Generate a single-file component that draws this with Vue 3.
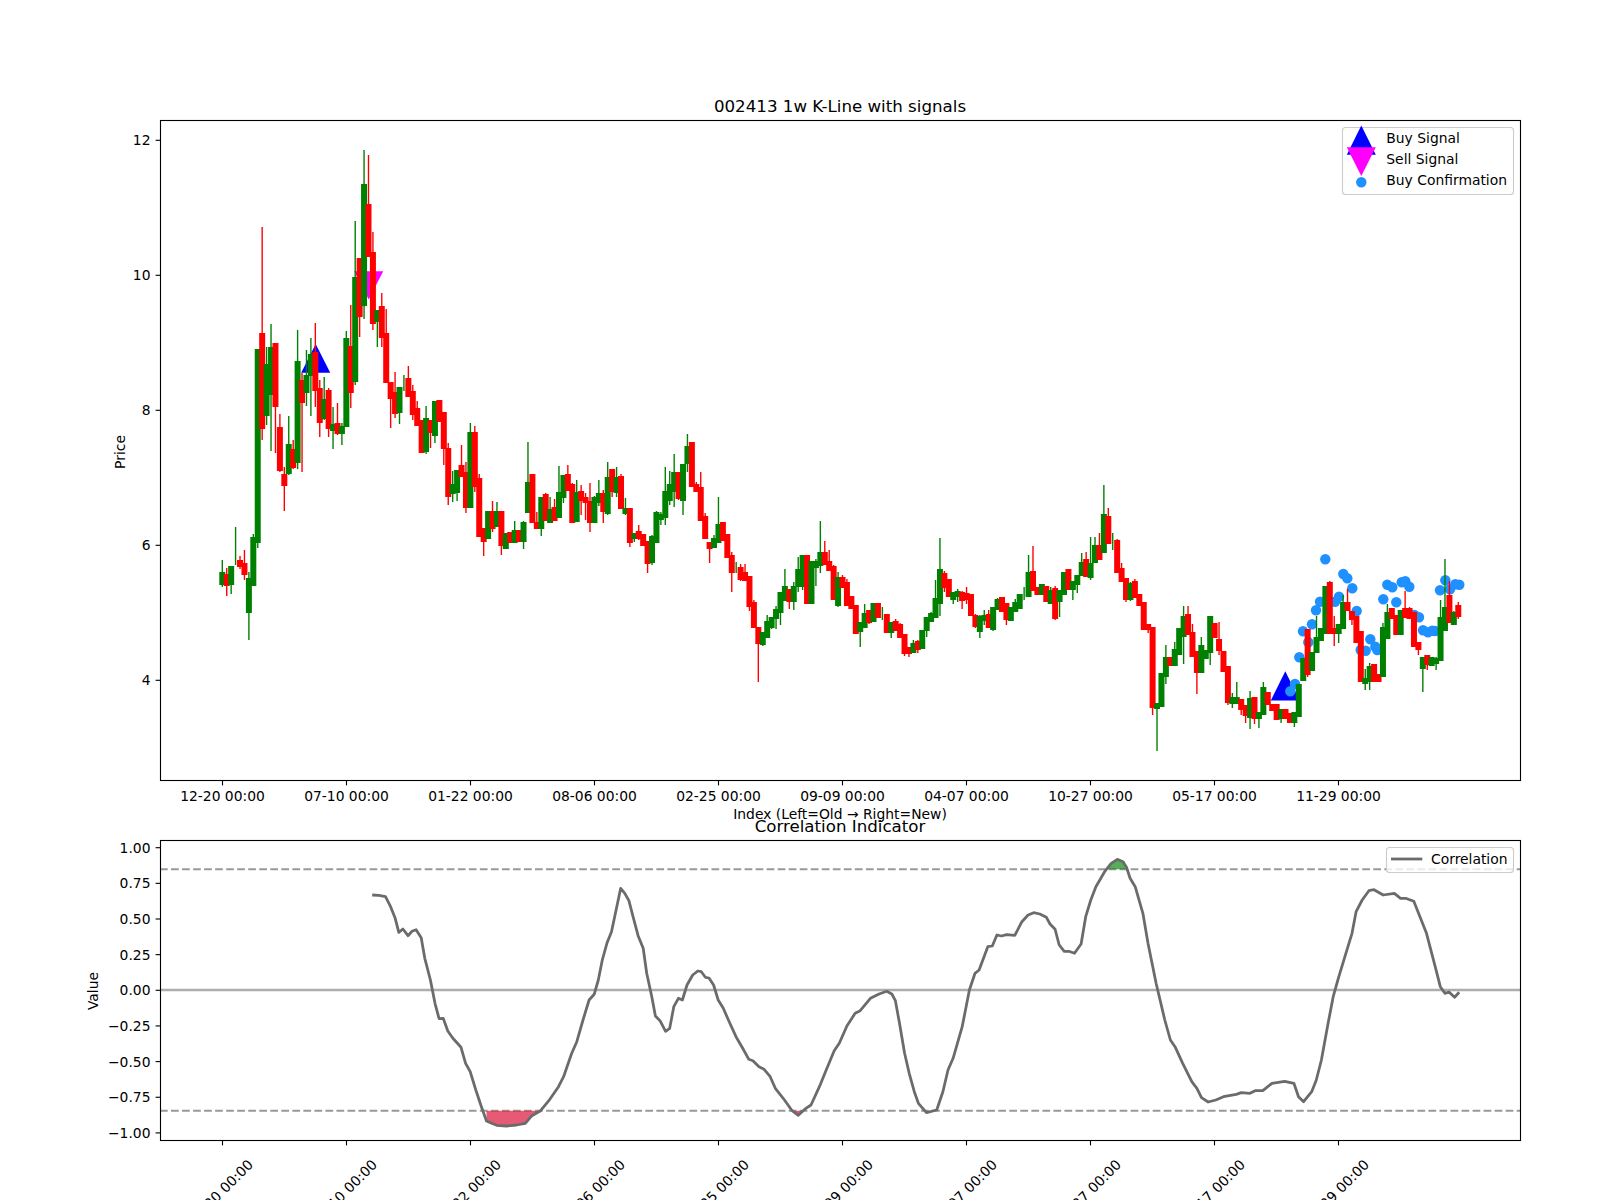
<script setup>
import { computed } from 'vue'

// color high bodyTop bodyBottom low, all in chart pixels
const rawBars = `
G 560 572 585 587
R 568 574 586 596
G 566 566 585 594
G 527 565 565 565
R 556 560 567 569
R 550 563 575 580
G 572 578 613 640
G 534 537 586 586
G 350 349 543 548
R 227 333 429 440
G 347 364 416 425
G 324 347 395 451
R 343 343 407 453
R 414 427 471 472
R 467 474 486 511
G 416 444 474 475
R 440 449 468 469
G 330 361 463 469
R 373 380 403 472
G 350 375 393 406
G 338 354 376 416
R 323 352 391 407
R 380 388 423 437
G 377 399 419 420
R 388 390 429 437
G 407 424 431 449
R 403 423 434 435
G 423 426 434 445
G 331 338 427 427
R 305 346 393 408
G 221 277 382 385
R 258 258 317 337
G 150 184 306 319
R 155 204 257 257
R 232 252 324 330
G 310 310 322 347
R 293 306 338 347
R 309 333 383 383
R 382 382 399 428
R 372 392 414 418
G 387 387 413 424
G 375 390 390 391
R 366 378 397 397
R 385 391 415 420
R 401 408 426 426
R 420 420 453 453
G 406 418 452 454
R 420 420 433 448
G 401 401 436 443
R 400 400 422 422
R 412 412 449 465
R 443 448 497 505
G 471 484 494 502
G 470 470 493 501
R 445 465 477 477
R 462 472 508 513
G 423 432 508 508
R 426 432 487 492
R 474 478 537 537
R 528 528 542 556
G 511 511 539 539
R 501 511 529 532
G 502 511 527 527
R 511 511 546 555
G 533 533 549 549
R 532 532 543 543
G 521 530 543 543
R 530 530 542 542
G 521 522 542 549
G 442 482 513 513
R 474 474 523 523
R 512 522 529 529
G 497 497 529 536
R 493 494 521 521
G 497 509 523 523
R 499 507 521 521
G 466 492 518 518
G 475 475 498 503
R 465 474 491 491
R 483 484 523 523
G 480 492 522 522
R 485 491 501 515
R 493 497 503 520
R 483 501 523 532
G 496 497 523 523
G 480 493 503 506
R 490 493 512 523
G 462 477 514 515
R 469 469 492 497
G 467 477 493 497
R 474 476 509 509
G 498 508 514 515
R 508 508 543 547
G 533 533 539 542
R 525 531 539 540
R 534 534 546 546
R 541 541 564 573
G 535 536 563 565
G 511 512 543 543
G 512 514 520 525
G 467 491 518 525
G 471 484 501 505
G 454 472 492 507
R 472 472 499 500
G 464 464 501 515
G 434 446 464 472
R 442 442 487 487
R 482 484 492 492
R 472 487 521 521
R 513 516 539 539
R 542 542 549 563
G 535 538 548 548
G 497 524 543 543
R 522 522 541 541
R 534 534 558 558
R 552 555 573 592
G 562 570 570 573
R 564 567 580 581
R 564 572 581 581
R 576 576 607 611
R 600 602 628 628
R 627 627 644 682
G 632 632 645 646
G 615 621 638 638
G 617 617 628 629
G 606 609 619 629
G 592 592 613 625
G 569 586 601 601
R 589 589 602 609
G 582 586 602 610
G 557 569 587 592
G 555 555 587 590
R 555 555 604 604
G 561 561 604 604
G 559 561 568 586
G 521 552 566 573
R 541 552 565 565
R 550 561 571 571
R 565 566 600 600
G 572 577 606 607
R 575 577 588 588
R 579 582 606 606
R 596 596 609 609
R 605 605 634 634
G 622 622 632 647
G 604 613 628 628
R 610 610 623 624
G 603 603 622 622
R 603 603 618 618
G 607 620 620 620
R 614 614 633 633
G 622 622 633 638
R 619 621 631 631
R 623 624 638 638
R 634 634 654 656
R 647 647 654 657
G 640 643 653 653
R 640 641 650 653
G 630 630 649 649
G 617 617 631 637
G 612 613 622 622
G 580 598 618 618
G 538 569 604 616
R 571 573 588 592
R 579 579 597 597
G 592 592 600 604
G 589 591 597 602
R 591 592 601 609
R 587 593 600 604
R 594 594 616 616
R 614 615 627 628
G 615 616 632 638
G 610 615 621 625
R 610 614 628 628
G 607 607 630 631
G 598 599 610 610
R 597 597 612 612
R 603 603 620 625
G 607 607 621 621
G 599 602 612 612
G 594 594 609 609
G 587 591 591 600
G 555 572 597 597
R 546 571 591 591
R 587 587 595 595
G 584 584 595 595
R 586 586 602 602
G 587 590 604 604
R 586 588 619 620
G 590 590 602 617
G 572 572 595 595
R 569 569 590 590
G 581 581 590 600
G 575 575 585 593
G 553 562 576 576
R 552 559 577 577
G 537 563 578 580
G 537 545 563 563
R 533 545 560 560
G 485 514 553 553
R 508 516 544 544
G 533 541 541 550
R 539 540 573 573
R 563 568 582 582
R 578 578 600 602
G 582 583 600 601
R 579 581 598 598
R 594 594 606 606
R 602 602 630 630
R 624 624 630 633
R 627 627 708 715
G 703 703 709 751
G 673 673 707 707
G 645 657 677 684
R 657 657 666 666
G 642 649 666 666
G 628 628 655 655
G 606 616 637 664
R 606 614 635 635
R 624 632 657 657
R 651 651 673 694
G 637 645 673 673
G 650 650 659 659
G 616 616 653 665
R 623 623 638 638
R 622 639 651 655
R 651 651 672 672
R 666 666 703 705
G 693 697 704 708
G 682 697 704 704
R 699 699 710 715
R 705 705 716 723
G 691 698 718 729
R 697 697 719 724
G 712 712 719 728
G 682 687 715 715
R 692 692 705 705
R 704 704 711 711
R 704 704 720 720
G 709 709 719 723
R 709 709 719 719
R 713 713 723 723
G 712 712 723 727
G 684 684 717 717
G 658 658 681 681
R 629 629 675 677
G 652 652 671 671
G 616 637 653 653
G 628 628 641 641
G 586 586 634 634
R 581 582 634 634
R 616 628 634 646
G 624 624 634 643
G 595 602 629 629
R 589 602 611 611
R 611 611 620 625
R 616 616 643 643
R 631 631 682 682
G 669 678 684 690
G 663 666 682 690
R 664 664 682 682
R 674 674 682 682
G 623 627 677 677
G 604 612 639 639
R 608 608 619 619
R 615 615 635 635
G 610 610 635 635
R 591 608 618 618
R 607 608 619 619
R 612 612 647 647
R 642 642 650 655
G 657 657 669 692
R 655 655 665 670
G 657 657 666 666
G 657 658 664 670
G 600 617 661 661
G 559 607 631 631
R 581 595 623 623
G 611 612 625 625
R 602 605 617 619
`

const candles = computed(() =>
  rawBars.trim().split('\n').map((line, i) => {
    const [c, high, top, bottom, low] = line.split(' ')
    return {
      x: 222.3 + i * 4.43,
      color: c === 'R' ? '#ff0000' : '#008000',
      high: +high, top: +top, bottom: +bottom, low: +low,
    }
  })
)

const confirmDots = [
  [1325.3, 559.3], [1343.3, 574], [1347.3, 578.3], [1352.3, 588.3], [1339, 596.7], [1335, 601.7],
  [1320, 601.7], [1316, 610.3], [1312, 624.3], [1303, 631.3], [1308.3, 642.3], [1356.7, 611],
  [1299.3, 657.3], [1295, 684], [1290.3, 691.3], [1383.3, 599.3], [1387.3, 584.7], [1392.3, 587.3],
  [1396.3, 602.3], [1401.7, 582.3], [1405.3, 581.3], [1409.3, 586.7], [1414.3, 615], [1419, 617.3],
  [1423, 630.3], [1428, 632.3], [1432.3, 630.7], [1435, 631], [1370.3, 639.3], [1375.3, 646.7],
  [1377.3, 650], [1360.7, 650], [1365.7, 650.7], [1445.3, 580.3], [1440, 590.3], [1450, 589.3],
  [1455.3, 584.3], [1459.3, 584.7],
]

const corr = [
  [372.2, 895], [378.9, 895.3], [385.5, 896.7], [390.6, 906.7], [395.2, 918.3], [398.8, 932.3],
  [402.9, 929], [408, 935.7], [412, 931.3], [416.1, 929.7], [421.2, 937.7], [424.8, 958.3],
  [430.4, 980], [435, 1003.3], [439.1, 1018.7], [443.2, 1018.3], [447.8, 1031], [452.9, 1038.3],
  [461, 1047.3], [465.6, 1063.3], [470.2, 1071.7], [475.8, 1090], [481.4, 1106.7], [486.5, 1121],
  [491.6, 1123.3], [496.7, 1125.3], [506.4, 1126], [516.6, 1125], [525.3, 1123.3], [531.9, 1115.7],
  [540.6, 1110.7], [548.8, 1100.7], [558.5, 1086.7], [563.6, 1076.7], [571.7, 1053.3], [576.8, 1041.7],
  [583, 1020], [589.1, 1000], [594.2, 994.3], [598.3, 980], [602.3, 960], [606.9, 943.3],
  [611.5, 931.7], [616.1, 910], [620.7, 888.3], [624.8, 893.3], [628.9, 900.7], [633.5, 918.3],
  [638.1, 935.7], [643.2, 948.3], [646.7, 973.3], [651.8, 996.7], [655.4, 1016], [660, 1020.7],
  [665.6, 1031.3], [669.7, 1028.3], [673.8, 1006.7], [678.4, 998.3], [682.4, 1000], [687, 985],
  [692.7, 975], [697.8, 971], [701.3, 971.7], [705.4, 977.3], [709, 978], [713.6, 985],
  [718.2, 1000], [723.3, 1008.3], [728.4, 1020], [736, 1036.7], [742.7, 1048.3], [748.8, 1059.3],
  [752.9, 1060.7], [759, 1066.7], [764.1, 1069.3], [770.2, 1076.7], [775.3, 1088.3], [784.5, 1100],
  [792.1, 1110.7], [798.3, 1115.3], [805.9, 1108.3], [811, 1105], [819.4, 1086.7], [825.5, 1071.7],
  [834.2, 1050.7], [839.3, 1043.3], [846.9, 1026], [855.1, 1013.3], [860.2, 1010.7], [870.4, 998.3],
  [879.1, 994], [886.7, 991.3], [891.8, 994], [895.4, 1000.7], [899.5, 1023.3], [904.6, 1053.3],
  [909.2, 1073.3], [914.3, 1091.7], [918.4, 1103.3], [926.5, 1112.7], [936.7, 1110], [942.9, 1091.7],
  [948, 1070], [953.1, 1058.3], [962.2, 1026.7], [969.4, 990], [975, 973.3], [979.1, 970],
  [987.8, 946.7], [992.3, 946], [996.9, 935], [1001.5, 936], [1006.6, 934.7], [1014.8, 935.3],
  [1021.9, 921.7], [1028.1, 915], [1033.7, 912.7], [1039.8, 914], [1046.4, 917.3], [1050, 924],
  [1055.1, 929.3], [1059.2, 945], [1064.3, 951.3], [1068.9, 951.3], [1074.5, 953.3], [1081.1, 944],
  [1085.7, 916.7], [1090.8, 900], [1095.9, 886.7], [1104.6, 871.7], [1111.2, 863.3], [1117.3, 859.3],
  [1123, 861.7], [1126.5, 867.3], [1130.1, 878.3], [1135.2, 886.7], [1142.9, 913.3], [1148, 943.3],
  [1156.1, 983.3], [1164.8, 1020], [1170.4, 1040], [1175, 1046.7], [1182.7, 1063.3], [1191.8, 1081.7],
  [1196.9, 1088.3], [1201.5, 1097.7], [1208.2, 1102], [1215.8, 1100], [1223.5, 1096.7], [1236.2, 1094.3],
  [1241.3, 1092.7], [1250, 1093.3], [1255.1, 1090.7], [1262.8, 1090.7], [1271.9, 1083.3], [1284.7, 1081.3],
  [1293.9, 1083.3], [1298.5, 1096.7], [1303.6, 1101.7], [1311.7, 1091.7], [1316.3, 1080], [1321.4, 1060],
  [1328.1, 1023.3], [1333.2, 996.7], [1338.3, 978.3], [1344.9, 956.7], [1352, 933.3], [1356.1, 911.7],
  [1362.2, 900], [1368.9, 890.7], [1374, 889.7], [1383.2, 895], [1394.4, 893.3], [1400.5, 898.3],
  [1405.6, 898.3], [1413.8, 901.3], [1426.5, 933.3], [1435.2, 966.7], [1440.3, 986.7], [1444.9, 993.3],
  [1449, 992], [1454.6, 997.3], [1459.2, 992.3],
]

const corrPath = corr.map(p => p.join(',')).join(' ')

const oversold = '486.5,1110.7 486.5,1121 491.6,1123.3 496.7,1125.3 506.4,1126 516.6,1125 525.3,1123.3 531.9,1115.7 540.6,1110.7'
const oversold2 = '793,1110.7 798.3,1115.3 803,1110.7'
const overbought = '1107.8,869.3 1111.2,863.3 1117.3,859.3 1123,861.7 1126,869.3'

const dates = ['12-20', '07-10', '01-22', '08-06', '02-25', '09-09', '04-07', '10-27', '05-17', '11-29']
const xTicks = dates.map((d, i) => ({ x: 222.5 + i * 124, label: d + ' 00:00' }))

const priceTicks = [12, 10, 8, 6, 4].map(v => ({ y: 680.3 - (v - 4) * 67.5, label: String(v) }))

const valueTicks = [1, 0.75, 0.5, 0.25, 0, -0.25, -0.5, -0.75, -1].map(v => ({
  y: 990.3 - v * 142.6,
  label: (v < 0 ? '\u2212' : '') + Math.abs(v).toFixed(2),
}))
</script>

<template>
  <div class="figure">
    <svg class="chart" width="1600" height="1200" viewBox="0 0 1600 1200">
      <!-- kline panel -->
      <text class="title" x="840" y="112">002413 1w K-Line with signals</text>

      <polygon class="buy" points="315.7,344 330.2,372.7 301.2,372.7" />
      <polygon class="buy" points="1285.3,671.3 1299.8,700.5 1270.8,700.5" />
      <polygon class="sell" points="354.2,271.3 383.2,271.3 368.7,299.5" />
      <circle v-for="(d, i) in confirmDots" :key="i" class="dot" :cx="d[0]" :cy="d[1]" r="5.2" />

      <g v-for="(c, i) in candles" :key="i">
        <line :x1="c.x" :x2="c.x" :y1="c.high" :y2="c.low" :stroke="c.color" stroke-width="1.39" />
        <rect :x="c.x - 3" :y="c.top" width="6" :height="c.bottom - c.top" :fill="c.color" />
      </g>

      <rect class="spine" x="160.5" y="120.5" width="1360" height="660" />
      <g v-for="t in xTicks" :key="t.label">
        <line class="tick" :x1="t.x" :x2="t.x" y1="781" y2="785.4" />
        <text class="label mid" :x="t.x" y="801">{{ t.label }}</text>
      </g>
      <g v-for="t in priceTicks" :key="t.label">
        <line class="tick" x1="155.6" x2="160" :y1="t.y" :y2="t.y" />
        <text class="label end" x="150.5" :y="t.y + 5">{{ t.label }}</text>
      </g>
      <text class="label mid" transform="translate(125 452) rotate(-90)">Price</text>
      <text class="label mid" x="840" y="819">Index (Left=Old → Right=New)</text>

      <g class="legend">
        <rect class="legend-box" x="1342.5" y="127.5" width="171" height="67" rx="3" />
        <polygon class="buy" points="1361.3,125.5 1375.8,154.7 1346.8,154.7" />
        <polygon class="sell" points="1346.8,147.3 1375.8,147.3 1361.3,176" />
        <circle class="dot" cx="1361.3" cy="182.3" r="5.2" />
        <text class="label" x="1386.3" y="143">Buy Signal</text>
        <text class="label" x="1386.3" y="164.3">Sell Signal</text>
        <text class="label" x="1386.3" y="185.2">Buy Confirmation</text>
      </g>

      <!-- correlation panel -->
      <text class="title" x="840" y="832">Correlation Indicator</text>

      <line class="zero" x1="160" x2="1520" y1="990" y2="990" />
      <line class="limit" x1="160" x2="1520" y1="869.3" y2="869.3" />
      <line class="limit" x1="160" x2="1520" y1="1110.7" y2="1110.7" />
      <polygon class="fill-low" :points="oversold" />
      <polygon class="fill-low" :points="oversold2" />
      <polygon class="fill-high" :points="overbought" />
      <polyline class="corr" :points="corrPath" />

      <rect class="spine" x="160.5" y="840.5" width="1360" height="300" />
      <g v-for="t in xTicks" :key="'b' + t.label">
        <line class="tick" :x1="t.x" :x2="t.x" y1="1141" y2="1145.4" />
        <text class="label mid" :transform="`translate(${t.x - 2} 1192) rotate(-45) translate(0 5)`">{{ t.label }}</text>
      </g>
      <g v-for="t in valueTicks" :key="t.label">
        <line class="tick" x1="155.6" x2="160" :y1="t.y" :y2="t.y" />
        <text class="label end" x="150.5" :y="t.y + 5">{{ t.label }}</text>
      </g>
      <text class="label mid" transform="translate(98 991) rotate(-90)">Value</text>

      <g class="legend">
        <rect class="legend-box" x="1386.5" y="847.5" width="127" height="25" rx="3" />
        <line class="corr" x1="1391" x2="1422.3" y1="859" y2="859" />
        <text class="label" x="1431" y="864">Correlation</text>
      </g>
    </svg>
  </div>
</template>

<style scoped>
.figure { width: 1600px; height: 1200px; overflow: hidden; background: #fff; }
.chart { display: block; }

.label, .title { font-family: "DejaVu Sans", sans-serif; fill: #000; }
.label { font-size: 13.89px; }
.title { font-size: 16.67px; text-anchor: middle; }
.mid { text-anchor: middle; }
.end { text-anchor: end; }

.spine { fill: none; stroke: #000; stroke-width: 1.11; }
.tick { stroke: #000; stroke-width: 1.11; }

.buy { fill: #0000ff; }
.sell { fill: #ff00ff; }
.dot { fill: #1e90ff; }

.zero { stroke: #adadad; stroke-width: 2.4; }
.limit { stroke: #999999; stroke-width: 2.08; stroke-dasharray: 7.7 3.33; }
.corr { fill: none; stroke: #6b6b6b; stroke-width: 2.78; stroke-linejoin: round; }
.fill-low { fill: #dc143c; fill-opacity: 0.7; }
.fill-high { fill: #008000; fill-opacity: 0.65; }

.legend-box { fill: #fff; fill-opacity: 0.8; stroke: #ccc; stroke-width: 1.11; }
</style>

<style>
html, body { margin: 0; background: #fff; }
</style>
